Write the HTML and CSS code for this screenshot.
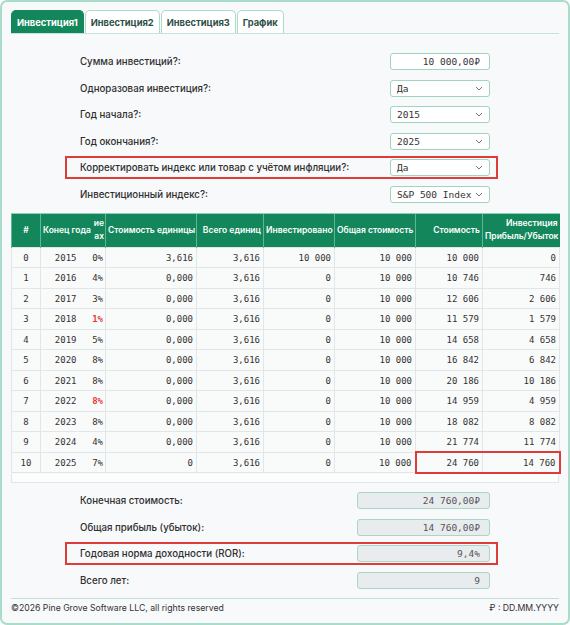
FILE: index.html
```html
<!DOCTYPE html>
<html lang="ru">
<head>
<meta charset="utf-8">
<title>Инвестиции</title>
<link rel="stylesheet" href="styles.css">
</head>
<body>
<div class="app">
  <nav class="tabs">
    <div class="tab active">Инвестиция1</div>
    <div class="tab">Инвестиция2</div>
    <div class="tab">Инвестиция3</div>
    <div class="tab">График</div>
  </nav>

  <section class="form">
    <div class="row"><span class="label">Сумма инвестиций?:</span><div class="field num">10 000,00₽</div></div>
    <div class="row"><span class="label">Одноразовая инвестиция?:</span><div class="field sel"><span>Да</span><svg class="chev" width="8" height="5" viewBox="0 0 8 5"><path d="M1 1l3 3 3-3" /></svg></div></div>
    <div class="row"><span class="label">Год начала?:</span><div class="field sel"><span>2015</span><svg class="chev" width="8" height="5" viewBox="0 0 8 5"><path d="M1 1l3 3 3-3" /></svg></div></div>
    <div class="row"><span class="label">Год окончания?:</span><div class="field sel"><span>2025</span><svg class="chev" width="8" height="5" viewBox="0 0 8 5"><path d="M1 1l3 3 3-3" /></svg></div></div>
    <div class="row hl"><span class="label">Корректировать индекс или товар с учётом инфляции?:</span><div class="field sel"><span>Да</span><svg class="chev" width="8" height="5" viewBox="0 0 8 5"><path d="M1 1l3 3 3-3" /></svg></div></div>
    <div class="row"><span class="label">Инвестиционный индекс?:</span><div class="field sel"><span>S&amp;P 500 Index</span><svg class="chev" width="8" height="5" viewBox="0 0 8 5"><path d="M1 1l3 3 3-3" /></svg></div></div>
  </section>

  <div class="tablewrap">
    <table class="grid">
      <colgroup>
        <col class="c-n"><col class="c-y"><col class="c-p"><col class="c-u"><col class="c-t"><col class="c-i"><col class="c-o"><col class="c-s"><col class="c-g">
      </colgroup>
      <thead>
        <tr>
          <th class="ctr">#</th>
          <th class="left">Конец года</th>
          <th class="pcth">ие<br>ах</th>
          <th>Стоимость единицы</th>
          <th>Всего единиц</th>
          <th>Инвестировано</th>
          <th>Общая стоимость</th>
          <th>Стоимость</th>
          <th>Инвестиция<br>Прибыль/Убыток</th>
        </tr>
      </thead>
      <tbody>
        <tr><td class="ctr">0</td><td class="yr">2015</td><td class="pc">0%</td><td>3,616</td><td>3,616</td><td>10 000</td><td>10 000</td><td>10 000</td><td>0</td></tr>
        <tr><td class="ctr">1</td><td class="yr">2016</td><td class="pc">4%</td><td>0,000</td><td>3,616</td><td>0</td><td>10 000</td><td>10 746</td><td>746</td></tr>
        <tr><td class="ctr">2</td><td class="yr">2017</td><td class="pc">3%</td><td>0,000</td><td>3,616</td><td>0</td><td>10 000</td><td>12 606</td><td>2 606</td></tr>
        <tr><td class="ctr">3</td><td class="yr">2018</td><td class="pc neg">1%</td><td>0,000</td><td>3,616</td><td>0</td><td>10 000</td><td>11 579</td><td>1 579</td></tr>
        <tr><td class="ctr">4</td><td class="yr">2019</td><td class="pc">5%</td><td>0,000</td><td>3,616</td><td>0</td><td>10 000</td><td>14 658</td><td>4 658</td></tr>
        <tr><td class="ctr">5</td><td class="yr">2020</td><td class="pc">8%</td><td>0,000</td><td>3,616</td><td>0</td><td>10 000</td><td>16 842</td><td>6 842</td></tr>
        <tr><td class="ctr">6</td><td class="yr">2021</td><td class="pc">8%</td><td>0,000</td><td>3,616</td><td>0</td><td>10 000</td><td>20 186</td><td>10 186</td></tr>
        <tr><td class="ctr">7</td><td class="yr">2022</td><td class="pc neg">8%</td><td>0,000</td><td>3,616</td><td>0</td><td>10 000</td><td>14 959</td><td>4 959</td></tr>
        <tr><td class="ctr">8</td><td class="yr">2023</td><td class="pc">8%</td><td>0,000</td><td>3,616</td><td>0</td><td>10 000</td><td>18 082</td><td>8 082</td></tr>
        <tr><td class="ctr">9</td><td class="yr">2024</td><td class="pc">4%</td><td>0,000</td><td>3,616</td><td>0</td><td>10 000</td><td>21 774</td><td>11 774</td></tr>
        <tr class="last"><td class="ctr">10</td><td class="yr">2025</td><td class="pc">7%</td><td>0</td><td>3,616</td><td>0</td><td>10 000</td><td class="mark-l">24 760</td><td class="mark-r">14 760</td></tr>
      </tbody>
    </table>
    <div class="hscroll"></div>
  </div>

  <section class="form results">
    <div class="row"><span class="label">Конечная стоимость:</span><div class="field out">24 760,00₽</div></div>
    <div class="row"><span class="label">Общая прибыль (убыток):</span><div class="field out">14 760,00₽</div></div>
    <div class="row hl"><span class="label">Годовая норма доходности (ROR):</span><div class="field out">9,4%</div></div>
    <div class="row"><span class="label">Всего лет:</span><div class="field out">9</div></div>
  </section>

  <footer class="foot">
    <span>©2026 Pine Grove Software LLC, all rights reserved</span>
    <span>₽ : DD.MM.YYYY</span>
  </footer>
</div>
</body>
</html>
```

FILE: styles.css
```css
* { box-sizing: border-box; }
html, body { margin: 0; padding: 0; background: #ffffff; }
body {
  font-family: Inter, "Noto Sans", "Liberation Sans", sans-serif;
  color: #333;
}
.app {
  width: 570px;
  height: 625px;
  border: 2px solid #a9dcca;
  border-radius: 7px;
  background: #f8f9fa;
  padding: 8px 9px 0 9px;
  display: flex;
  flex-direction: column;
}

/* Tabs */
.tabs {
  display: flex;
  gap: 1px;
  border-bottom: 1px solid #c8e2d8;
  height: 24px;
}
.tab {
  height: 23px;
  padding: 0 5px;
  border: 1px solid #a9dcca;
  border-bottom: none;
  border-radius: 5px 5px 0 0;
  background: #ffffff;
  color: #2e4f45;
  font-size: 9.3px;
  font-weight: 700;
  display: flex;
  align-items: center;
  white-space: nowrap;
}
.tab.active {
  background: #13875b;
  border-color: #13875b;
  color: #ffffff;
}

/* Forms */
.form {
  display: flex;
  flex-direction: column;
  gap: 9.6px;
  padding: 19px 69px 0 69px;
}
.row {
  display: flex;
  align-items: center;
  height: 17px;
}
.row.hl {
  height: 23px;
  margin: -3px -8px -3px -15px;
  padding: 1px 6px 1px 13px;
  border: 2px solid #e03b3b;
}
.label {
  flex: 1;
  font-size: 9.7px;
  font-weight: 500;
  color: #2f2f2f;
  white-space: nowrap;
}
.field {
  width: 100px;
  height: 17px;
  border: 1px solid #9fd4c0;
  border-radius: 3px;
  background: #ffffff;
  font-family: "DejaVu Sans Mono", "Liberation Mono", monospace;
  font-size: 9.5px;
  color: #333;
  display: flex;
  align-items: center;
}
.field.num {
  justify-content: flex-end;
  padding-right: 9px;
}
.field.sel {
  justify-content: space-between;
  padding: 0 6px 0 6px;
}
.chev {
  fill: none;
  stroke: #777;
  stroke-width: 1;
}

/* Table */
.tablewrap {
  margin-top: 10px;
}
.grid {
  width: 548px;
  table-layout: fixed;
  border-collapse: collapse;
  font-family: "DejaVu Sans Mono", "Liberation Mono", monospace;
  font-size: 9px;
  color: #333;
}
.c-n { width: 29px; }
.c-y { width: 50px; }
.c-p { width: 15px; }
.c-u { width: 91px; }
.c-t { width: 67px; }
.c-i { width: 71px; }
.c-o { width: 81px; }
.c-s { width: 67px; }
.c-g { width: 77px; }
.grid th {
  height: 34px;
  background: #13875b;
  color: #ffffff;
  font-family: Inter, "Noto Sans", "Liberation Sans", sans-serif;
  font-size: 8.5px;
  font-weight: 600;
  line-height: 13px;
  text-align: right;
  padding: 0 2px 0 2px;
  border-left: 1px solid #5db793;
  border-top: 1px solid #8fd0b5;
  white-space: nowrap;
  overflow: hidden;
}
.grid th.ctr { text-align: center; }
.grid th.left { text-align: left; }
.grid th.pcth { border-left: none; padding: 0 1px 0 0; }
.grid td {
  height: 20.5px;
  padding: 0 3px 0 0;
  text-align: right;
  background: #f9fafa;
  border: 1px solid #e2e6e6;
  white-space: nowrap;
}
.grid td.ctr { text-align: center; padding: 0; }
.grid td.yr { padding-right: 14px; border-right: none; }
.grid td.pc { padding-right: 2px; border-left: none; }
.grid td.neg { color: #e53935; font-weight: 700; }
.grid td.mark-l {
  border-left: 2px solid #e03b3b;
  border-top: 2px solid #e03b3b;
  border-bottom: 2px solid #e03b3b;
}
.grid td.mark-r {
  border-right: 2px solid #e03b3b;
  border-top: 2px solid #e03b3b;
  border-bottom: 2px solid #e03b3b;
}
.hscroll {
  height: 9px;
  width: 548px;
  border: 1px solid #e2e6e6;
  border-top: none;
  background: #fcfdfd;
}

/* Results */
.results {
  padding-top: 9px;
}
.field.out {
  width: 133px;
  background: #e9ecef;
  border-color: #a9d6c5;
  color: #555;
  justify-content: flex-end;
  padding-right: 9px;
}

/* Footer */
.foot {
  margin-top: 9px;
  border-top: 1px solid #c8ddd5;
  padding-top: 3px;
  display: flex;
  justify-content: space-between;
  font-size: 8.7px;
  line-height: 13px;
  color: #333;
}
```
